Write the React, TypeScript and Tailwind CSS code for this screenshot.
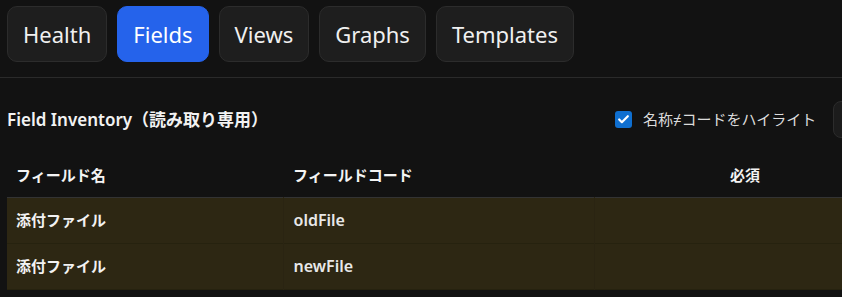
import { Check } from "lucide-react";

const TABS = ["Health", "Fields", "Views", "Graphs", "Templates"];

const ROWS = [
  { name: "添付ファイル", code: "oldFile" },
  { name: "添付ファイル", code: "newFile" },
];

export default function App() {
  return (
    <div className="h-[297px] w-[842px] overflow-hidden bg-[#121212] font-['Noto_Sans','Noto_Sans_CJK_JP',sans-serif] text-[#ececec]">
      <nav className="flex gap-[10px] border-b border-[#2a2a2a] px-[7px] pt-[6px] pb-[15px]">
        {TABS.map((tab) => {
          const active = tab === "Fields";
          return (
            <button
              key={tab}
              className={
                active
                  ? "h-[56px] shrink-0 rounded-[10px] border border-[#2563eb] bg-[#2563eb] px-[15px] text-[22px] text-white"
                  : "h-[56px] shrink-0 rounded-[10px] border border-[#2c2c2c] bg-[#1e1e1e] px-[15px] text-[22px] text-[#f0f0f0]"
              }
            >
              {tab}
            </button>
          );
        })}
      </nav>

      <section className="w-[1100px] px-[7px] pt-[23px]">
        <div className="flex h-[37px] items-center">
          <h2 className="w-[608px] shrink-0 text-[17px] font-semibold text-[#f2f2f2]">
            Field Inventory（読み取り専用）
          </h2>
          <label className="flex shrink-0 items-center gap-[11px] text-[15px] text-[#dcdcdc]">
            <span className="flex h-[17px] w-[17px] items-center justify-center rounded-[3px] bg-[#0f6fd0]">
              <Check className="h-[13px] w-[13px] text-white" strokeWidth={4} />
            </span>
            名称≠コードをハイライト
          </label>
          <button className="ml-[17px] h-[37px] shrink-0 rounded-[8px] border border-[#2c2c2c] bg-[#1c1c1c] pr-4 pl-[24px] text-[15px] text-[#ececec]">
            CSVをコピー
          </button>
        </div>

        <table className="mt-[15px] table-fixed border-collapse text-[15px]">
          <colgroup>
            <col className="w-[280px]" />
            <col className="w-[315px]" />
            <col className="w-[306px]" />
            <col className="w-[200px]" />
          </colgroup>
          <thead>
            <tr className="h-[44px] border-b border-[#333333] font-bold text-[#f4f4f4]">
              <th className="px-[9px] text-left font-bold">フィールド名</th>
              <th className="px-[10px] text-left font-bold">フィールドコード</th>
              <th className="px-[10px] text-center font-bold">必須</th>
              <th className="px-[10px] text-left font-bold" />
            </tr>
          </thead>
          <tbody>
            {ROWS.map((row) => (
              <tr
                key={row.code}
                className="h-[46px] border-b border-[#26220f] bg-[#2d2713]"
              >
                <td className="border-r border-[#2a2412] px-[9px] font-bold text-[#f2f2f2]">
                  {row.name}
                </td>
                <td className="border-r border-[#2a2412] px-[10px] text-[16px] font-semibold text-[#e8e8e8]">
                  {row.code}
                </td>
                <td className="border-r border-[#2a2412] px-[10px]" />
                <td className="px-[10px]" />
              </tr>
            ))}
          </tbody>
        </table>
      </section>
    </div>
  );
}
